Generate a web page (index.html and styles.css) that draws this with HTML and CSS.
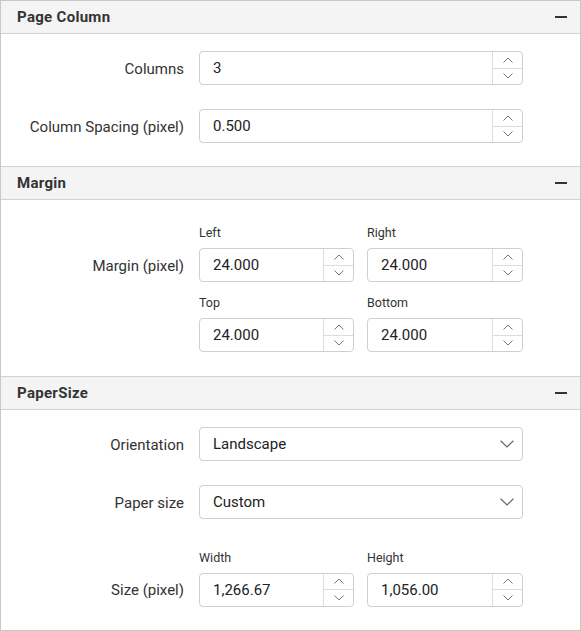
FILE: index.html
```html
<!DOCTYPE html>
<html>
<head>
<meta charset="utf-8">
<link rel="stylesheet" href="styles.css">
</head>
<body>
<div class="panel">
  <section class="sec">
    <div class="sec-head"><span class="sec-title">Page Column</span><span class="minus"></span></div>
    <div class="sec-body">
      <div class="row">
        <label class="row-label">Columns</label>
        <div class="spin"><span class="val">3</span><span class="btns"><span class="btn"><svg width="10" height="6" viewBox="0 0 10 6"><path d="M0.5 5.5L5 1L9.5 5.5" fill="none" stroke="#777" stroke-width="1"/></svg></span><span class="btn btn-dn"><svg width="10" height="6" viewBox="0 0 10 6"><path d="M0.5 0.5L5 5L9.5 0.5" fill="none" stroke="#777" stroke-width="1"/></svg></span></span></div>
      </div>
      <div class="row">
        <label class="row-label">Column Spacing (pixel)</label>
        <div class="spin"><span class="val">0.500</span><span class="btns"><span class="btn"><svg width="10" height="6" viewBox="0 0 10 6"><path d="M0.5 5.5L5 1L9.5 5.5" fill="none" stroke="#777" stroke-width="1"/></svg></span><span class="btn btn-dn"><svg width="10" height="6" viewBox="0 0 10 6"><path d="M0.5 0.5L5 5L9.5 0.5" fill="none" stroke="#777" stroke-width="1"/></svg></span></span></div>
      </div>
    </div>
  </section>

  <section class="sec">
    <div class="sec-head"><span class="sec-title">Margin</span><span class="minus"></span></div>
    <div class="sec-body sec-body-pair">
      <div class="row">
        <label class="row-label row-label-top">Margin (pixel)</label>
        <div class="pair">
          <div class="field"><span class="sub">Left</span>
            <div class="spin"><span class="val">24.000</span><span class="btns"><span class="btn"><svg width="10" height="6" viewBox="0 0 10 6"><path d="M0.5 5.5L5 1L9.5 5.5" fill="none" stroke="#777" stroke-width="1"/></svg></span><span class="btn btn-dn"><svg width="10" height="6" viewBox="0 0 10 6"><path d="M0.5 0.5L5 5L9.5 0.5" fill="none" stroke="#777" stroke-width="1"/></svg></span></span></div>
          </div>
          <div class="field"><span class="sub">Right</span>
            <div class="spin"><span class="val">24.000</span><span class="btns"><span class="btn"><svg width="10" height="6" viewBox="0 0 10 6"><path d="M0.5 5.5L5 1L9.5 5.5" fill="none" stroke="#777" stroke-width="1"/></svg></span><span class="btn btn-dn"><svg width="10" height="6" viewBox="0 0 10 6"><path d="M0.5 0.5L5 5L9.5 0.5" fill="none" stroke="#777" stroke-width="1"/></svg></span></span></div>
          </div>
          <div class="field"><span class="sub">Top</span>
            <div class="spin"><span class="val">24.000</span><span class="btns"><span class="btn"><svg width="10" height="6" viewBox="0 0 10 6"><path d="M0.5 5.5L5 1L9.5 5.5" fill="none" stroke="#777" stroke-width="1"/></svg></span><span class="btn btn-dn"><svg width="10" height="6" viewBox="0 0 10 6"><path d="M0.5 0.5L5 5L9.5 0.5" fill="none" stroke="#777" stroke-width="1"/></svg></span></span></div>
          </div>
          <div class="field"><span class="sub">Bottom</span>
            <div class="spin"><span class="val">24.000</span><span class="btns"><span class="btn"><svg width="10" height="6" viewBox="0 0 10 6"><path d="M0.5 5.5L5 1L9.5 5.5" fill="none" stroke="#777" stroke-width="1"/></svg></span><span class="btn btn-dn"><svg width="10" height="6" viewBox="0 0 10 6"><path d="M0.5 0.5L5 5L9.5 0.5" fill="none" stroke="#777" stroke-width="1"/></svg></span></span></div>
          </div>
        </div>
      </div>
    </div>
  </section>

  <section class="sec">
    <div class="sec-head"><span class="sec-title">PaperSize</span><span class="minus"></span></div>
    <div class="sec-body">
      <div class="row">
        <label class="row-label">Orientation</label>
        <div class="select"><span class="val">Landscape</span><svg class="caret" width="14" height="8" viewBox="0 0 14 8"><path d="M0.6 0.8L7 7L13.4 0.8" fill="none" stroke="#666" stroke-width="1.2"/></svg></div>
      </div>
      <div class="row">
        <label class="row-label">Paper size</label>
        <div class="select"><span class="val">Custom</span><svg class="caret" width="14" height="8" viewBox="0 0 14 8"><path d="M0.6 0.8L7 7L13.4 0.8" fill="none" stroke="#666" stroke-width="1.2"/></svg></div>
      </div>
      <div class="row row-gap-top">
        <label class="row-label row-label-top">Size (pixel)</label>
        <div class="pair">
          <div class="field"><span class="sub">Width</span>
            <div class="spin"><span class="val">1,266.67</span><span class="btns"><span class="btn"><svg width="10" height="6" viewBox="0 0 10 6"><path d="M0.5 5.5L5 1L9.5 5.5" fill="none" stroke="#777" stroke-width="1"/></svg></span><span class="btn btn-dn"><svg width="10" height="6" viewBox="0 0 10 6"><path d="M0.5 0.5L5 5L9.5 0.5" fill="none" stroke="#777" stroke-width="1"/></svg></span></span></div>
          </div>
          <div class="field"><span class="sub">Height</span>
            <div class="spin"><span class="val">1,056.00</span><span class="btns"><span class="btn"><svg width="10" height="6" viewBox="0 0 10 6"><path d="M0.5 5.5L5 1L9.5 5.5" fill="none" stroke="#777" stroke-width="1"/></svg></span><span class="btn btn-dn"><svg width="10" height="6" viewBox="0 0 10 6"><path d="M0.5 0.5L5 5L9.5 0.5" fill="none" stroke="#777" stroke-width="1"/></svg></span></span></div>
          </div>
        </div>
      </div>
    </div>
  </section>
</div>
</body>
</html>
```

FILE: styles.css
```css
* { box-sizing: border-box; }
html, body { margin: 0; padding: 0; background: #fff; }
body {
  font-family: Roboto, "Liberation Sans", sans-serif;
  font-size: 15px;
  color: #333;
}
.panel {
  width: 581px;
  height: 631px;
  border: 1px solid #c8c8c8;
  overflow: hidden;
}
.sec-head {
  height: 33px;
  background: #f4f4f4;
  border-bottom: 1px solid #d2d2d2;
  display: flex;
  align-items: center;
  justify-content: space-between;
  padding: 0 13px 0 16px;
}
.sec + .sec .sec-head {
  height: 34px;
  border-top: 1px solid #d2d2d2;
}
.sec-title {
  font-weight: 700;
  font-size: 15px;
  color: #333;
  letter-spacing: 0.3px;
}
.minus {
  width: 12px;
  height: 2px;
  background: #333;
}
.sec-body {
  padding: 17px 0 23px;
  display: flex;
  flex-direction: column;
  gap: 24px;
}
.sec-body-pair { padding: 25px 0 24px; }
.row {
  display: grid;
  grid-template-columns: 183px 324px;
  column-gap: 15px;
  align-items: center;
}
.row-gap-top { margin-top: 6px; }
.row-label {
  text-align: right;
  font-size: 15px;
  color: #333;
  white-space: nowrap;
  padding-top: 2px;
}
.row-label-top {
  align-self: start;
  padding-top: 24px;
  line-height: 34px;
}
.pair {
  display: grid;
  grid-template-columns: 155px 156px;
  column-gap: 13px;
  row-gap: 13px;
}
.field { display: flex; flex-direction: column; }
.sub {
  font-size: 12.5px;
  line-height: 16px;
  margin-bottom: 7px;
  color: #333;
}
.spin, .select {
  height: 34px;
  border: 1px solid #cfcfcf;
  border-radius: 4px;
  display: flex;
  align-items: stretch;
  background: #fff;
}
.val {
  flex: 1;
  padding-left: 13px;
  line-height: 32px;
  font-size: 15px;
  color: #222;
}
.btns {
  width: 30px;
  border-left: 1px solid #dcdcdc;
  display: flex;
  flex-direction: column;
}
.btn {
  flex: 1;
  display: flex;
  align-items: center;
  justify-content: center;
}
.btn-dn { border-top: 1px solid #dcdcdc; }
.select { align-items: center; }
.caret { margin-right: 8px; }
```
